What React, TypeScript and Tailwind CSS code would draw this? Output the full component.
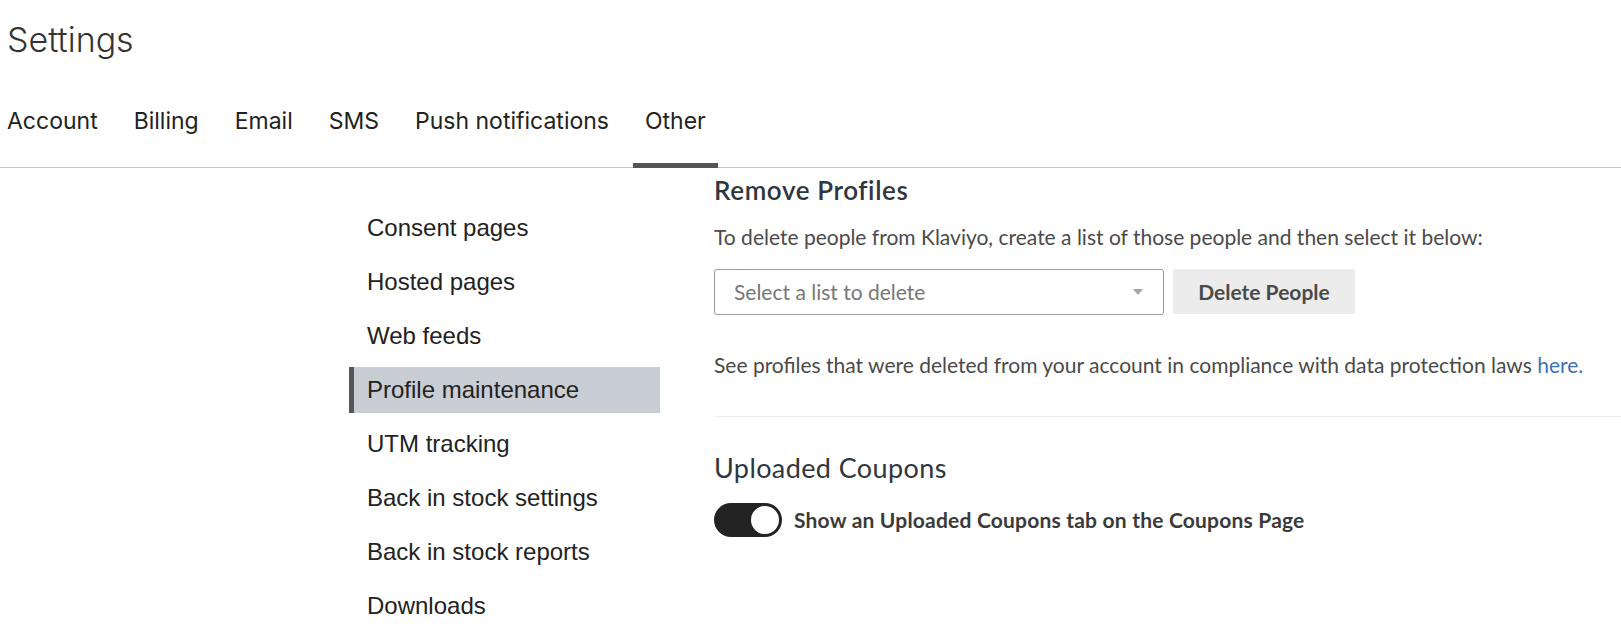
const tabs = ["Account", "Billing", "Email", "SMS", "Push notifications", "Other"];

const sideItems = [
  "Consent pages",
  "Hosted pages",
  "Web feeds",
  "Profile maintenance",
  "UTM tracking",
  "Back in stock settings",
  "Back in stock reports",
  "Downloads",
];

export default function App() {
  return (
    <div className="w-full h-[636px] overflow-hidden bg-white text-[#222]">
      <div className="h-[78px] pl-[7px] pt-[20px] font-['Inter',sans-serif] text-[34px] leading-[40px] font-light text-[#333]">
        Settings
      </div>

      <div className="flex gap-[36px] pl-[7px] pt-[29px] pb-[31px] border-b border-[#c4c4c4] font-['Inter',sans-serif] text-[23px] leading-[29px] text-[#222]">
        {tabs.map((t) => (
          <div key={t} className="relative">
            {t}
            {t === "Other" && (
              <span className="absolute -left-3 -right-3 -bottom-[32px] h-[5px] bg-[#555]" />
            )}
          </div>
        ))}
      </div>

      <div className="flex">
        <div className="ml-[349px] w-[311px] pt-[37px] flex flex-col gap-[8px] font-['Liberation_Sans',Arial,sans-serif] text-[24px]">
          {sideItems.map((s) => (
            <div
              key={s}
              className={
                s === "Profile maintenance"
                  ? "h-[46px] flex items-center pl-[13px] border-l-[5px] border-[#555] bg-[#c9cdd4]"
                  : "h-[46px] flex items-center pl-[18px]"
              }
            >
              {s}
            </div>
          ))}
        </div>

        <div className="flex-1 ml-[54px] pt-[7px] font-['Lato',sans-serif] text-[#4a4a4a]">
          <div className="text-[26px] leading-[30px] font-semibold tracking-[0.6px] text-[#2f3640]">Remove Profiles</div>
          <p className="mt-[19px] text-[21px] leading-[26px]">
            To delete people from Klaviyo, create a list of those people and then select it below:
          </p>
          <div className="mt-[19px] flex gap-[9px]">
            <div className="w-[450px] h-[46px] flex items-center justify-between pl-[19px] pr-[20px] border border-[#9a9a9a] rounded-[3px] text-[21px] text-[#777]">
              <span>Select a list to delete</span>
              <svg width="10" height="6" viewBox="0 0 10 6">
                <path d="M0 0 L10 0 L5 6 Z" fill="#a6a6a6" />
              </svg>
            </div>
            <button className="w-[182px] h-[45px] bg-[#ececec] rounded-[2px] text-[21px] font-bold text-[#4a4a4a]">
              Delete People
            </button>
          </div>
          <p className="mt-[37px] text-[21px] leading-[26px]">
            See profiles that were deleted from your account in compliance with data protection laws{" "}
            <span className="text-[#3d6fb6]">here.</span>
          </p>
          <div className="mt-[38px] border-t border-[#efefef]" />
          <div className="mt-[35px] text-[27px] leading-[32px] tracking-[0.4px] text-[#2f3640]">Uploaded Coupons</div>
          <div className="mt-[19px] flex items-center gap-[12px]">
            <div className="w-[68px] h-[34px] rounded-full bg-[#232323] flex items-center justify-end p-[1px]">
              <div className="w-[32px] h-[32px] rounded-full bg-white border-[2px] border-[#232323]" />
            </div>
            <span className="text-[21px] font-bold tracking-[0.2px] text-[#3a3a3a]">
              Show an Uploaded Coupons tab on the Coupons Page
            </span>
          </div>
        </div>
      </div>
    </div>
  );
}
